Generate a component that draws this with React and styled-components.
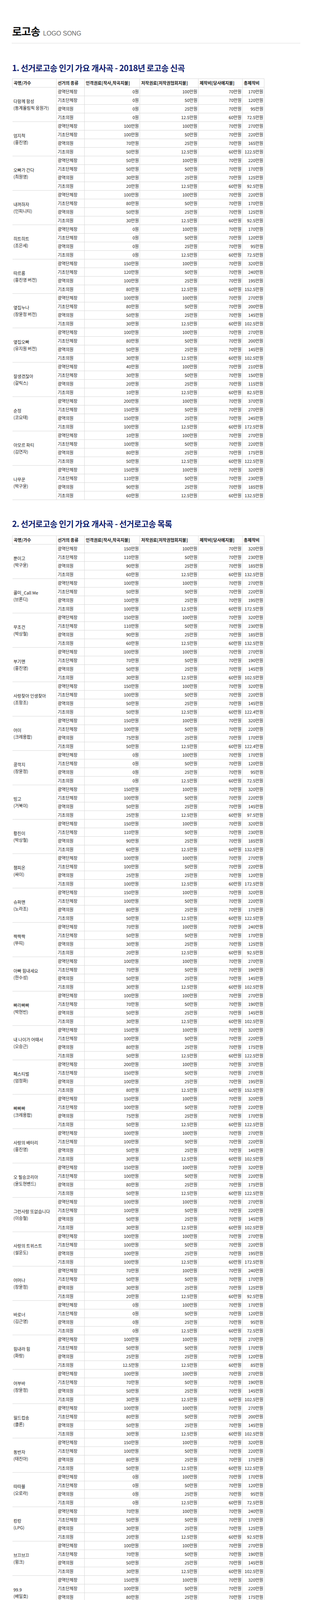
import React from "react";
import styled, { createGlobalStyle } from "styled-components";

const GlobalStyle = createGlobalStyle`
  html, body {
    margin: 0;
    padding: 0;
    background: #fff;
  }
  body {
    font-family: "Noto Sans CJK KR", "Noto Sans", sans-serif;
    color: #222;
  }
`;

const Page = styled.div`
  width: 800px;
  box-sizing: border-box;
  padding: 62px 30px 37px 31px;
`;

const TitleRow = styled.div`
  display: flex;
  align-items: baseline;
  gap: 8px;
  height: 36px;
`;

const Title = styled.h1`
  margin: 0;
  font-size: 27px;
  line-height: 36px;
  font-weight: 700;
  color: #111;
  letter-spacing: -1px;
`;

const TitleSub = styled.span`
  font-family: "Liberation Sans", Arial, sans-serif;
  font-size: 16px;
  color: #666;
`;

const Divider = styled.hr`
  margin: 12px 0 0 -1px;
  border: 0;
  border-top: 1px solid #dcdcdc;
`;

const Heading = styled.h2`
  margin: ${(p) => p.$top}px 0 ${(p) => p.$bottom}px;
  font-size: 21px;
  line-height: 28px;
  font-weight: 700;
  color: #101d6e;
  letter-spacing: -0.6px;
`;

const Table = styled.table`
  border-collapse: collapse;
  table-layout: fixed;
  width: 646px;
  font-size: 11px;
  line-height: 17px;
  color: #222;
`;

const Row = styled.tr`
  height: 22px;
`;

const Th = styled.th`
  border: 1px solid #d8d8d8;
  padding: 0 3px;
  height: 20px;
  text-align: left;
  font-weight: 700;
  white-space: nowrap;
  overflow: hidden;
`;

const Td = styled.td`
  border: 1px solid #d8d8d8;
  padding: 0 ${(p) => (p.$right ? "2px" : "3px")};
  height: 20px;
  text-align: ${(p) => (p.$right ? "right" : "left")};
  vertical-align: middle;
  white-space: nowrap;
`;

const SongCell = styled(Td)`
  border-left: none;
  white-space: normal;
`;

const Notes = styled.ul`
  list-style: none;
  margin: 18px 0 0;
  padding: 0;
  color: #16237a;
  font-size: 17px;
  line-height: 31px;
  font-weight: 500;
  letter-spacing: -0.6px;
`;

const COLS = [113, 72, 142, 150, 113, 56];
const HEAD = [
  "곡명/가수",
  "선거의 종류",
  "인격권료[작사,작곡지불]",
  "저작권료[저작권협회지불]",
  "제작비[당사에지불]",
  "총제작비",
];
const KINDS = ["광역단체장", "기초단체장", "광역의원", "기초의원"];
const COPY = [100, 50, 25, 12.5];
const MAKE = [70, 70, 70, 60];

const won = (n) => (n === 0 ? "0원" : `${n}만원`);

// [인격권료 x4, 총제작비 x4]
const A = [[150, 110, 90, 60], [320, 230, 185, 132.5]];
const B = [[100, 70, 50, 30], [270, 190, 145, 102.5]];
const C = [[150, 100, 80, 50], [320, 220, 175, 122.5]];
const D = [[100, 80, 50, 30], [270, 200, 145, 102.5]];
const E = [[70, 50, 30, 20], [240, 170, 125, 92.5]];
const F = [[100, 100, 100, 100], [270, 220, 195, 172.5]];
const G = [[100, 100, 50, 30], [270, 220, 145, 102.5]];
const Z = [[0, 0, 0, 0], [170, 120, 95, 72.5]];

const newSongs = [
  ["다함께 함성", "(동계올림픽 응원가)", Z],
  ["엄지척", "(홍진영)", [[100, 100, 70, 50], [270, 220, 165, 122.5]]],
  ["오빠가 간다", "(최원영)", [[50, 50, 30, 20], [220, 170, 125, 92.5]]],
  ["내꺼하자", "(인피니티)", [[100, 80, 50, 30], [220, 170, 125, 92.5]]],
  ["히트히트", "(조은세)", Z],
  ["따르릉", "(홍진영 버전)", [[150, 120, 100, 80], [320, 240, 195, 152.5]]],
  ["옆집누나", "(장윤정 버전)", D],
  ["옆집오빠", "(유지원 버전)", D],
  ["잘생겼잖아", "(갈릭스)", [[40, 30, 20, 10], [210, 150, 115, 82.5]]],
  ["순정", "(코요태)", [[200, 150, 150, 100], [370, 270, 245, 172.5]]],
  ["아모르 파티", "(김연자)", [[10, 100, 80, 50], [270, 220, 175, 122.5]]],
  ["나무꾼", "(박구윤)", A],
];

const listSongs = [
  ["뿐이고", "(박구윤)", A],
  ["콜미_Call Me", "(브론디)", [[100, 50, 100, 100], [270, 220, 195, 172.5]]],
  ["무조건", "(박상철)", A],
  ["부기맨", "(홍진영)", B],
  ["사랑찾아 인생찾아", "(조항조)", [[150, 100, 50, 50], [320, 220, 145, 122.4]]],
  ["어이", "(크레용팝)", [[150, 100, 75, 50], [320, 220, 170, 122.4]]],
  ["콩깍지", "(장윤정)", Z],
  ["빙고", "(거북이)", [[150, 100, 50, 25], [320, 220, 145, 97.5]]],
  ["황진이", "(박상철)", A],
  ["챔피온", "(싸이)", [[100, 100, 25, 100], [270, 220, 120, 172.5]]],
  ["슈퍼맨", "(노라조)", C],
  ["짝짝짝", "(뚜띠)", E],
  ["아빠 힘내세요", "(한수성)", B],
  ["빠라빠빠", "(박현빈)", B],
  ["내 나이가 어때서", "(오승근)", C],
  ["페스티벌", "(엄정화)", [[200, 150, 100, 80], [370, 270, 195, 152.5]]],
  ["빠빠빠", "(크레용팝)", [[150, 100, 75, 50], [320, 220, 170, 122.5]]],
  ["사랑의 배터리", "(홍진영)", G],
  ["오 필승코리아", "(윤도현밴드)", C],
  ["그런사람 또없습니다", "(이승철)", G],
  ["사랑의 트위스트", "(설운도)", F],
  ["어머나", "(장윤정)", E],
  ["바로너", "(김근영)", Z],
  ["힘내라 힘", "(화랑)", [[100, 50, 25, 12.5], [270, 170, 120, 85]]],
  ["어부바", "(장윤정)", B],
  ["월드컵송", "(클론)", D],
  ["동반자", "(태진아)", C],
  ["따따블", "(오로라)", Z],
  ["캉캉", "(LPG)", E],
  ["브끄브끄", "(윙크)", B],
  ["99.9", "(배일호)", C],
  ["앗뜨거", "(박현빈)", D],
  ["빵빵", "(박상철)", [[100, 70, 50, 30], [270, 240, 145, 102.5]]],
  ["바꿔", "(이정현)", [[200, 200, 200, 200], [370, 320, 295, 272.5]]],
  ["네박자", "(송대관)", [[100, 100, 80, 50], [270, 220, 175, 122.5]]],
  ["사랑은아무나하나", "(태진아)", F],
  ["신토불이", "(배일호)", A],
  ["잘살거야", "(태진아)", F],
  ["당신이 최고야", "(이창용)", [[110, 110, 90, 60], [280, 230, 185, 132.5]]],
  ["있을때 잘해", "(오승근)", [[100, 110, 90, 60], [270, 230, 185, 132.5]]],
  ["분위기좋고", "(송대관)", [[100, 50, 40, 30], [270, 170, 135, 102.5]]],
  ["유행가", "(송대관)", C],
  ["딱이야", "(성진우)", D],
  ["아 대한민국", "(정수라)", [[150, 140, 130, 100], [320, 260, 225, 172.5]]],
  ["새들처럼", "(변진섭)", [[100, 70, 50, 50], [270, 190, 145, 122.5]]],
  ["서울의 모정", "(패티김)", C],
  ["짠짜라", "(장윤정)", B],
];

const hi = [70, 60];
const mid = [60, 50];
const ownSongs = [
  ["필승가", hi, hi],
  ["No1 Style", hi, hi],
  ["대박송", mid, hi],
  ["깜찍송", mid, mid],
  ["챔피언송", mid, mid],
  ["전진송", mid, mid],
  ["당선가", hi, hi],
  ["꼭찍어요 0번", mid, mid],
  ["선택해요 0번", mid, mid],
  ["특별송", mid, mid],
  ["아리랑", mid, mid],
  ["비행기", mid, mid],
  ["우리모두 다 같이", mid, mid],
  ["언덕에 올라", hi, hi],
  ["연가", hi, hi],
];

const notes = [
  "- 선거로고송 제작에는 개사 및 가수료, 녹음, 편집, 믹싱 비용이 포함되어 있습니다.",
  "- 인격권료는 인격권자 (작곡가, 작사가)들과 협의하여 책정되므로 비용에 차이가 많습니다.",
  "- 교육위원선거는은 광역의원선거와 같고, 교육감선거는 기초단체장선거와 같습니다.",
  "- 모든 비용에 부가세는 별도입니다.",
];

const TableHead = () => (
  <>
    <colgroup>
      {COLS.map((w, i) => (
        <col key={i} style={{ width: w }} />
      ))}
    </colgroup>
    <thead>
      <Row>
        {HEAD.map((h) => (
          <Th key={h}>{h}</Th>
        ))}
      </Row>
    </thead>
  </>
);

const CoverTable = ({ songs }) => (
  <Table>
    <TableHead />
    <tbody>
      {songs.map(([title, artist, [fees, totals]]) =>
        KINDS.map((kind, i) => (
          <Row key={title + kind}>
            {i === 0 && (
              <SongCell rowSpan={4}>
                {title}
                <br />
                {artist}
              </SongCell>
            )}
            <Td>{kind}</Td>
            <Td $right>{won(fees[i])}</Td>
            <Td $right>{won(COPY[i])}</Td>
            <Td $right>{won(MAKE[i])}</Td>
            <Td $right>{won(totals[i])}</Td>
          </Row>
        ))
      )}
    </tbody>
  </Table>
);

const OwnTable = ({ songs }) => (
  <Table>
    <TableHead />
    <tbody>
      {songs.map(([title, make, total]) =>
        ["단체장", "의원"].map((kind, i) => (
          <Row key={title + kind}>
            {i === 0 && <SongCell rowSpan={2}>{title}</SongCell>}
            <Td>{kind}</Td>
            <Td />
            <Td />
            <Td $right>{won(make[i])}</Td>
            <Td $right>{won(total[i])}</Td>
          </Row>
        ))
      )}
    </tbody>
  </Table>
);

const App = () => (
  <>
    <GlobalStyle />
    <Page>
      <TitleRow>
        <Title>로고송</Title>
        <TitleSub>LOGO SONG</TitleSub>
      </TitleRow>
      <Divider />

      <Heading $top={48} $bottom={14}>
        1. 선거로고송 인기 가요 개사곡 - 2018년 로고송 신곡
      </Heading>
      <CoverTable songs={newSongs} />

      <Heading $top={46} $bottom={17}>
        2. 선거로고송 인기 가요 개사곡 - 선거로고송 목록
      </Heading>
      <CoverTable songs={listSongs} />

      <Heading $top={30} $bottom={10}>
        2. 자체 선거 기획송
      </Heading>
      <OwnTable songs={ownSongs} />

      <Notes>
        {notes.map((n) => (
          <li key={n}>{n}</li>
        ))}
      </Notes>
    </Page>
  </>
);

export default App;
